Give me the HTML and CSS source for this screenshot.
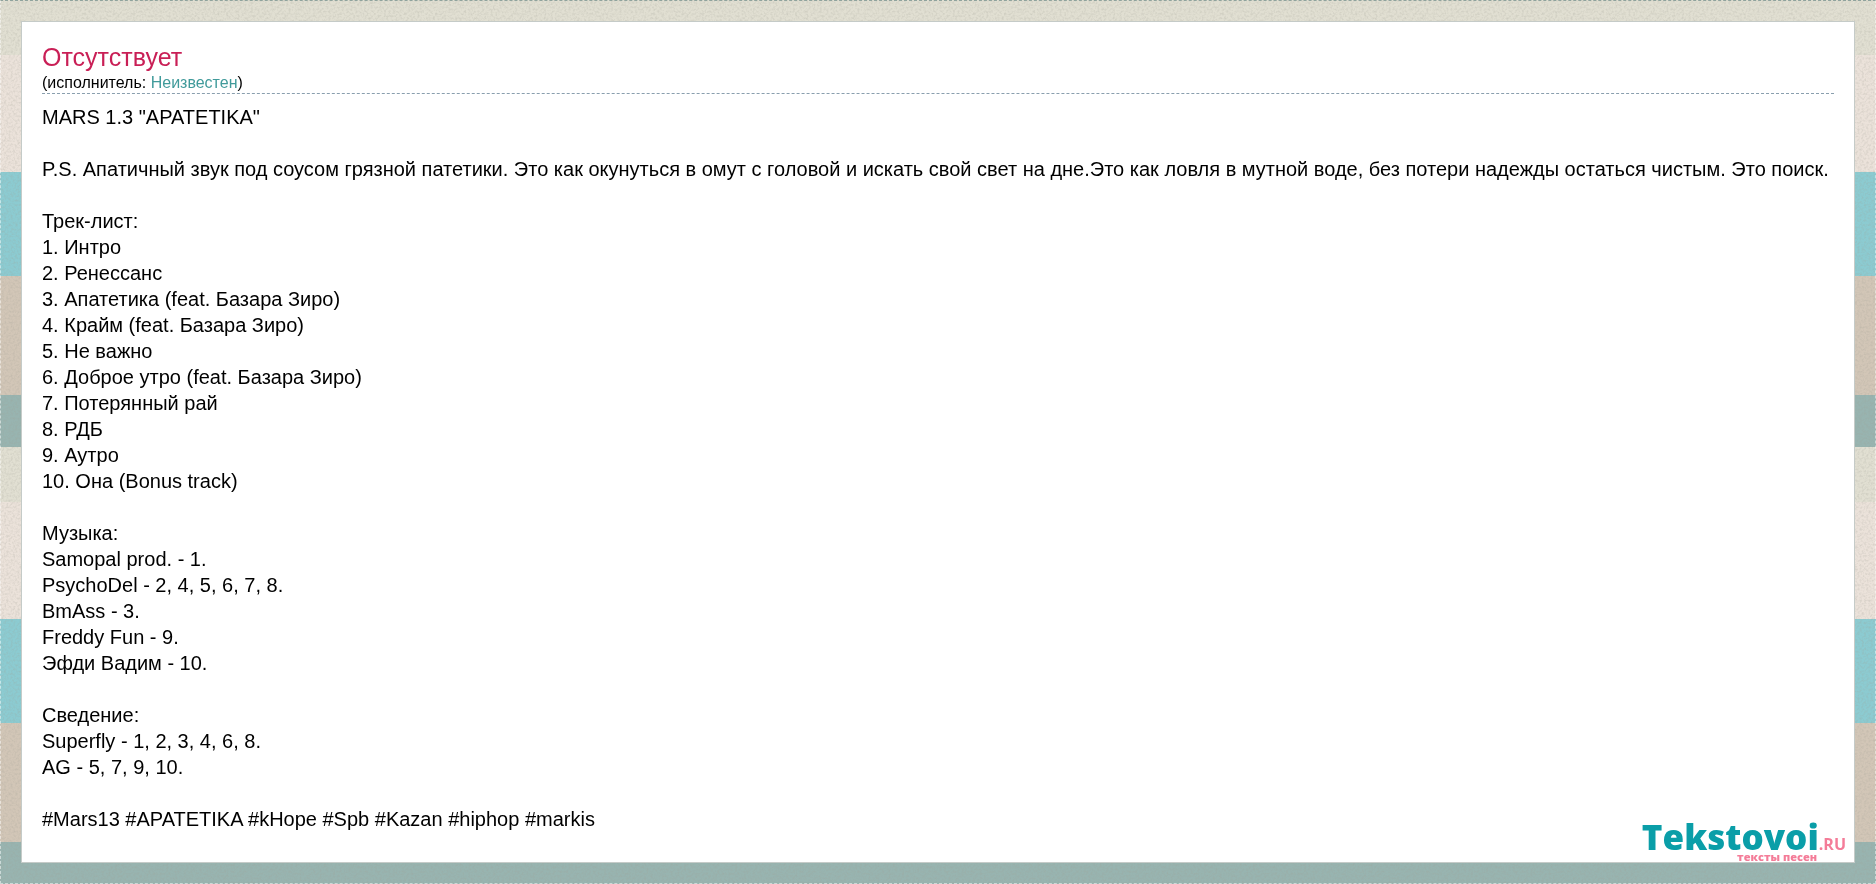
FILE: index.html
```
<!DOCTYPE html>
<html lang="ru">
<head>
    <meta charset="UTF-8">
    <meta name="viewport" content="width=device-width, initial-scale=1.0">
    <title>Отсутствует - Неизвестен</title>
    <link rel="stylesheet" href="styles.css">
</head>
<body>
    <svg class="grain" aria-hidden="true">
        <filter id="grain">
            <feTurbulence type="fractalNoise" baseFrequency="0.45" numOctaves="2"/>
            <feColorMatrix values="0 0 0 0 0.35  0 0 0 0 0.35  0 0 0 0 0.3  0.6 0 0 0 -0.25"/>
        </filter>
        <rect width="100%" height="100%" filter="url(#grain)"/>
    </svg>
    <div class="page">
        <main class="card">
            <header class="song-header">
                <h1>Отсутствует</h1>
                <p>(исполнитель: <a href="#">Неизвестен</a>)</p>
            </header>
            <div class="lyrics">MARS 1.3 "APATETIKA"

P.S. Апатичный звук под соусом грязной патетики. Это как окунуться в омут с головой и искать свой свет на дне.Это как ловля в мутной воде, без потери надежды остаться чистым. Это поиск.

Трек-лист:
1. Интро
2. Ренессанс
3. Апатетика (feat. Базара Зиро)
4. Крайм (feat. Базара Зиро)
5. Не важно
6. Доброе утро (feat. Базара Зиро)
7. Потерянный рай
8. РДБ
9. Аутро
10. Она (Bonus track)

Музыка:
Samopal prod. - 1.
PsychoDel - 2, 4, 5, 6, 7, 8.
BmAss - 3.
Freddy Fun - 9.
Эфди Вадим - 10.

Сведение:
Superfly - 1, 2, 3, 4, 6, 8.
AG - 5, 7, 9, 10.

#Mars13 #APATETIKA #kHope #Spb #Kazan #hiphop #markis</div>
            <a class="logo" href="#">
                <span class="logo-name">Tekstovoi<small>.RU</small></span>
                <span class="logo-text">тексты песен</span>
            </a>
        </main>
    </div>
</body>
</html>
```

FILE: styles.css
```
* {
    box-sizing: border-box;
}
body {
    margin: 0;
    font-family: "Liberation Sans", Arial, sans-serif;
    color: #000;
    background: repeating-linear-gradient(
        #e1dfd2 0, #e1dfd2 55px,
        #ebe2da 55px, #ebe2da 172px,
        #8ccbd1 172px, #8ccbd1 276px,
        #d2c6b7 276px, #d2c6b7 395px,
        #98b4b0 395px, #98b4b0 447px
    );
}
.grain {
    position: fixed;
    top: 0;
    left: 0;
    width: 100%;
    height: 100%;
    z-index: -1;
}
.page {
    min-height: 100vh;
    padding: 20px;
    border: 1px dashed rgba(255, 255, 255, 0.5);
    border-top-color: #8fa39d;
}
.card {
    position: relative;
    padding: 20px 20px 30px;
    background-color: #fff;
    border: 1px solid #c5cbc8;
}
.song-header {
    margin-bottom: 10px;
    border-bottom: 1px dashed #8a9fae;
}
.song-header h1 {
    margin: 0;
    font-size: 25px;
    line-height: 30px;
    font-weight: normal;
    color: #c91f56;
}
.song-header p {
    margin: 0;
    font-size: 16px;
    line-height: 21px;
}
.song-header a {
    color: #419b9b;
    text-decoration: none;
}
.lyrics {
    font-size: 20px;
    line-height: 26px;
    white-space: pre;
}
.logo {
    position: absolute;
    right: 8px;
    bottom: 0;
    display: flex;
    flex-direction: column;
    font-family: "Open Sans", "Noto Sans", sans-serif;
    font-weight: 800;
    text-decoration: none;
}
.logo-name {
    font-size: 35px;
    line-height: 26px;
    color: #0a9ea8;
}
.logo-name small {
    font-size: 16px;
    line-height: 1;
    font-weight: 700;
    color: #f47c98;
}
.logo-text {
    align-self: flex-end;
    margin-right: 29px;
    font-size: 11px;
    line-height: 10px;
    color: #f47c98;
}
```
